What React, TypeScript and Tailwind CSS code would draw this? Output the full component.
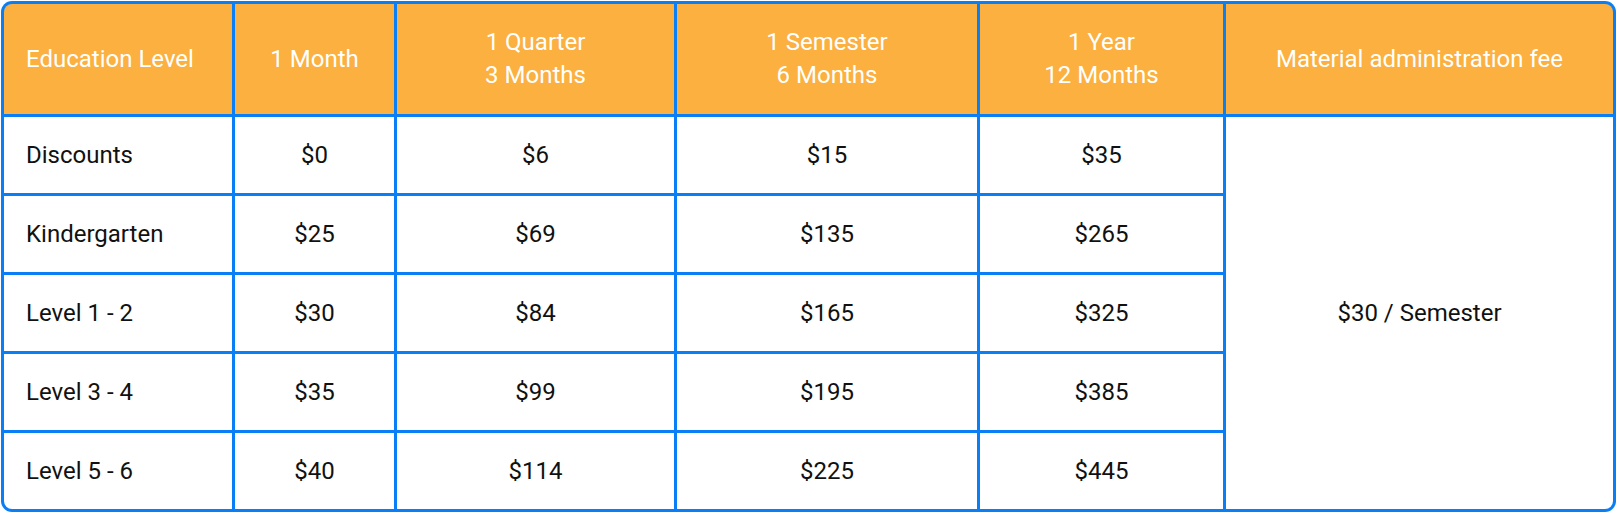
const rows = [
  { level: "Discounts", month: "$0", quarter: "$6", semester: "$15", year: "$35" },
  { level: "Kindergarten", month: "$25", quarter: "$69", semester: "$135", year: "$265" },
  { level: "Level 1 - 2", month: "$30", quarter: "$84", semester: "$165", year: "$325" },
  { level: "Level 3 - 4", month: "$35", quarter: "$99", semester: "$195", year: "$385" },
  { level: "Level 5 - 6", month: "$40", quarter: "$114", semester: "$225", year: "$445" },
];

const head = "bg-[#fbb040] text-white flex items-center justify-center text-center leading-[33px]";
const cell = "bg-white text-[#111] flex items-center justify-center";

export default function App() {
  return (
    <div className="w-[1617px] h-[513px] bg-white pt-px pl-px font-['Roboto',sans-serif] text-[24px]">
      <div className="w-[1615px] h-[511px] bg-[#0a7ff5] p-[3px] rounded-[11px] overflow-hidden grid grid-cols-[228px_159px_277px_300px_243px_387px] grid-rows-[110px_76px_76px_76px_76px_1fr] gap-[3px]">
        <div className={head + " !justify-start pl-[22px] rounded-tl-[8px]"}>Education Level</div>
        <div className={head}>1 Month</div>
        <div className={head}>
          1 Quarter
          <br />3 Months
        </div>
        <div className={head}>
          1 Semester
          <br />6 Months
        </div>
        <div className={head}>
          1 Year
          <br />12 Months
        </div>
        <div className={head + " rounded-tr-[8px]"}>Material administration fee</div>

        {rows.map((r, i) => (
          <>
            <div key={r.level} className={cell + " !justify-start pl-[22px]" + (i === rows.length - 1 ? " rounded-bl-[8px]" : "")}>
              {r.level}
            </div>
            <div className={cell}>{r.month}</div>
            <div className={cell}>{r.quarter}</div>
            <div className={cell}>{r.semester}</div>
            <div className={cell}>{r.year}</div>
            {i === 0 && (
              <div className={cell + " row-span-5 rounded-br-[8px]"}>$30 / Semester</div>
            )}
          </>
        ))}
      </div>
    </div>
  );
}
